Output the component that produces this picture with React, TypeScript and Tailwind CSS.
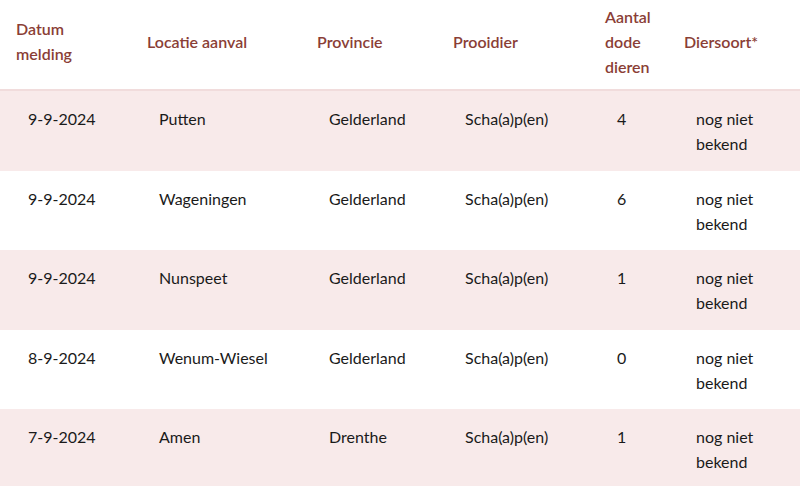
import React from "react";

const rows = [
  ["9-9-2024", "Putten", "Gelderland", "Scha(a)p(en)", "4"],
  ["9-9-2024", "Wageningen", "Gelderland", "Scha(a)p(en)", "6"],
  ["9-9-2024", "Nunspeet", "Gelderland", "Scha(a)p(en)", "1"],
  ["8-9-2024", "Wenum-Wiesel", "Gelderland", "Scha(a)p(en)", "0"],
  ["7-9-2024", "Amen", "Drenthe", "Scha(a)p(en)", "1"],
];

const cols = "grid grid-cols-[131px_170px_136px_152px_79px_132px]";

export default function App() {
  return (
    <div
      className="w-[800px] h-[486px] overflow-hidden bg-white text-[16px] leading-[25px]"
      style={{ fontFamily: "Lato, 'Liberation Sans', sans-serif" }}
    >
      <div className={`${cols} items-center h-[91px] pb-[7px] border-b-2 border-[#f1dcdc] font-semibold text-[#8a3e36]`}>
        <div className="pl-4 pr-4">Datum melding</div>
        <div className="pl-4 pr-4">Locatie aanval</div>
        <div className="pl-4 pr-4">Provincie</div>
        <div className="pl-4 pr-4">Prooidier</div>
        <div className="pl-4 pr-4">Aantal dode dieren</div>
        <div className="pl-4 pr-4">Diersoort*</div>
      </div>
      {rows.map((r, i) => (
        <div
          key={i}
          className={`${cols} h-[79.5px] pt-[15px] text-[#1a1a1a] ${i % 2 === 0 ? "bg-[#f8eaea]" : "bg-white"}`}
        >
          {r.map((c, j) => (
            <div key={j} className="pl-7 pr-4">{c}</div>
          ))}
          <div className="pl-7 pr-4">nog niet bekend</div>
        </div>
      ))}
    </div>
  );
}
